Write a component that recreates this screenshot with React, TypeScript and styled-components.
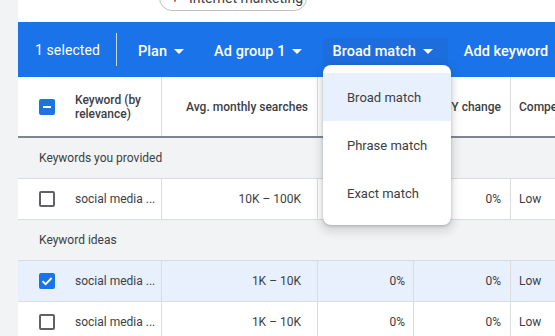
import React from "react";
import styled, { createGlobalStyle } from "styled-components";

const Global = createGlobalStyle`
  html, body { margin: 0; padding: 0; background: #fff; overflow: hidden; }
  body { font-family: Roboto, "Noto Sans", Arial, sans-serif; width: 555px; height: 336px; }
  * { box-sizing: border-box; }
`;

const Page = styled.div`
  display: flex;
  width: 555px;
  height: 336px;
  overflow: hidden;
`;

const SideStrip = styled.div`
  width: 18px;
  flex: 0 0 18px;
  background: #f1f3f4;
`;

const Main = styled.div`
  position: relative;
  flex: 1;
  min-width: 0;
  display: flex;
  flex-direction: column;
  overflow: hidden;
`;

const TopArea = styled.div`
  height: 22px;
  flex: 0 0 22px;
  overflow: hidden;
  display: flex;
  align-items: flex-end;
  padding: 0 0 11px 141px;
`;

const Chip = styled.div`
  flex: 0 0 auto;
  height: 26px;
  width: 148px;
  border: 1px solid #bdc1c6;
  border-radius: 13px;
  display: flex;
  align-items: center;
  gap: 10px;
  padding-left: 11px;
  font-size: 14px;
  color: #3c4043;
  white-space: nowrap;
`;

const ActionBar = styled.div`
  height: 55px;
  flex: 0 0 55px;
  background: #1a73e8;
  display: flex;
  align-items: center;
  padding-left: 17px;
  color: #fff;
  white-space: nowrap;
`;

const SelectedCount = styled.span`
  font-size: 14px;
  font-weight: 400;
  letter-spacing: 0.1px;
`;

const BarDivider = styled.div`
  flex: 0 0 1px;
  width: 1px;
  height: 33px;
  background: rgba(255, 255, 255, 0.75);
  margin: 0 12px 0 16px;
`;

const BarButton = styled.div<{ $active?: boolean; $gap?: number }>`
  display: flex;
  align-items: center;
  gap: 7px;
  height: 28px;
  margin-top: 4px;
  margin-right: ${(p) => p.$gap ?? 12}px;
  padding: 0 ${(p) => (p.$active ? 15 : 9)}px 0 9px;
  background: ${(p) => (p.$active ? "#1d6ddd" : "transparent")};
  border-radius: 4px 4px 0 0;
  font-size: 14.5px;
  font-weight: 500;
  letter-spacing: 0.05px;
`;

const Caret = () => (
  <svg width="10" height="5" viewBox="0 0 10 5">
    <path d="M0 0 L10 0 L5 5 Z" fill="#fff" />
  </svg>
);

const Table = styled.div`
  display: flex;
  flex-direction: column;
  color: #3c4043;
  font-size: 12px;
`;

const COLS = "144px 156px 96px 97px 150px";

const HeaderRow = styled.div`
  display: grid;
  grid-template-columns: ${COLS};
  height: 61px;
  border-bottom: 2px solid #80868b;
`;

const Row = styled.div<{ $selected?: boolean }>`
  display: grid;
  grid-template-columns: ${COLS};
  height: 41px;
  border-bottom: 1px solid #dadce0;
  background: ${(p) => (p.$selected ? "#e8f0fe" : "#fff")};
`;

const SectionRow = styled.div`
  height: 41px;
  display: flex;
  align-items: center;
  padding-left: 21px;
  background: #f1f3f4;
  border-bottom: 1px solid #dadce0;
  font-size: 12px;
  color: #3c4043;
`;

const Cell = styled.div<{ $align?: "left" | "right"; $pad?: number }>`
  display: flex;
  align-items: center;
  justify-content: ${(p) => (p.$align === "right" ? "flex-end" : "flex-start")};
  padding: 0 ${(p) => (p.$align === "right" ? p.$pad ?? 8 : 8)}px 0
    ${(p) => (p.$align === "right" ? 8 : p.$pad ?? 8)}px;
  border-right: 1px solid #dadce0;
  white-space: nowrap;
  overflow: hidden;
  font-size: 12px;
`;

const KeywordCell = styled(Cell)`
  gap: 20px;
  padding-left: 21px;
`;

const HeadText = styled.span`
  font-weight: 500;
  font-size: 12px;
  color: #3c4043;
  line-height: 14px;
  white-space: normal;
`;

const KeywordHead = styled(HeadText)`
  width: 70px;
`;

const Box = styled.div<{ $on?: boolean }>`
  flex: 0 0 16px;
  width: 16px;
  height: 16px;
  border-radius: 2px;
  border: 2px solid ${(p) => (p.$on ? "#1a73e8" : "#5f6368")};
  background: ${(p) => (p.$on ? "#1a73e8" : "transparent")};
  display: flex;
  align-items: center;
  justify-content: center;
`;

const Checkbox = ({ state }: { state: "off" | "on" | "mixed" }) => (
  <Box $on={state !== "off"}>
    {state === "on" && (
      <svg width="12" height="12" viewBox="0 0 12 12">
        <path d="M1.5 6.2 L4.6 9.2 L10.6 3" stroke="#fff" strokeWidth="1.8" fill="none" />
      </svg>
    )}
    {state === "mixed" && (
      <svg width="12" height="12" viewBox="0 0 12 12">
        <path d="M2 6 H10" stroke="#fff" strokeWidth="2" />
      </svg>
    )}
  </Box>
);

const Menu = styled.div`
  position: absolute;
  left: 305px;
  top: 65px;
  width: 128px;
  padding: 8px 0;
  background: #fff;
  border-radius: 8px;
  box-shadow: 0 1px 3px rgba(60, 64, 67, 0.3), 0 4px 8px 3px rgba(60, 64, 67, 0.15);
  z-index: 5;
`;

const MenuItem = styled.div<{ $active?: boolean }>`
  height: 48px;
  display: flex;
  align-items: center;
  padding-left: 24px;
  font-size: 13px;
  color: #3c4043;
  background: ${(p) => (p.$active ? "#e8f0fe" : "transparent")};
`;

type DataRow = { vol: string; three: string; yoy: string; comp: string; checked?: boolean };

const DataLine = ({ r }: { r: DataRow }) => (
  <Row $selected={r.checked}>
    <KeywordCell>
      <Checkbox state={r.checked ? "on" : "off"} />
      <span>social media ...</span>
    </KeywordCell>
    <Cell $align="right" $pad={16}>{r.vol}</Cell>
    <Cell $align="right" $pad={8}>{r.three}</Cell>
    <Cell $align="right" $pad={9}>{r.yoy}</Cell>
    <Cell>{r.comp}</Cell>
  </Row>
);

export default function App() {
  return (
    <>
      <Global />
      <Page>
        <SideStrip />
        <Main>
          <TopArea>
            <Chip>
              <span>+</span>
              <span>Internet marketing</span>
            </Chip>
          </TopArea>
          <ActionBar>
            <SelectedCount>1 selected</SelectedCount>
            <BarDivider />
            <BarButton>
              Plan <Caret />
            </BarButton>
            <BarButton>
              Ad group 1 <Caret />
            </BarButton>
            <BarButton $active $gap={7}>
              Broad match <Caret />
            </BarButton>
            <BarButton>Add keyword</BarButton>
          </ActionBar>
          <Table>
            <HeaderRow>
              <KeywordCell>
                <Checkbox state="mixed" />
                <KeywordHead>Keyword (by relevance)</KeywordHead>
              </KeywordCell>
              <Cell $align="right" $pad={9}>
                <HeadText>Avg. monthly searches</HeadText>
              </Cell>
              <Cell $align="right" $pad={8}>
                <HeadText>Three month change</HeadText>
              </Cell>
              <Cell $align="right" $pad={9}>
                <HeadText>YoY change</HeadText>
              </Cell>
              <Cell>
                <HeadText>Competition</HeadText>
              </Cell>
            </HeaderRow>
            <SectionRow>Keywords you provided</SectionRow>
            <DataLine r={{ vol: "10K – 100K", three: "0%", yoy: "0%", comp: "Low" }} />
            <SectionRow>Keyword ideas</SectionRow>
            <DataLine r={{ vol: "1K – 10K", three: "0%", yoy: "0%", comp: "Low", checked: true }} />
            <DataLine r={{ vol: "1K – 10K", three: "0%", yoy: "0%", comp: "Low" }} />
          </Table>
          <Menu>
            <MenuItem $active>Broad match</MenuItem>
            <MenuItem>Phrase match</MenuItem>
            <MenuItem>Exact match</MenuItem>
          </Menu>
        </Main>
      </Page>
    </>
  );
}
